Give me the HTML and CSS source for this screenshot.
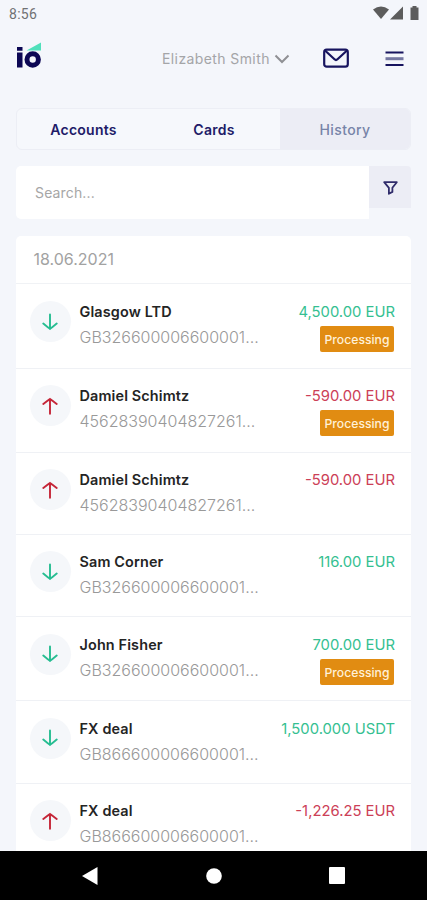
FILE: index.html
```html
<!DOCTYPE html>
<html lang="en">
<head>
<meta charset="utf-8">
<title>History</title>
<link rel="stylesheet" href="styles.css">
</head>
<body>
<svg width="0" height="0" class="defs">
  <symbol id="down" viewBox="0 0 16 18"><path d="M8 1.500v14.500M1.300 10.600L5.500 13.900Q7 15 8 15.800Q9 15 10.500 13.900L14.700 10.600"/></symbol>
  <symbol id="up" viewBox="0 0 16 18"><path d="M8 16.800V2M1.300 7L5.500 3.800Q7 2.800 8 2Q9 2.800 10.500 3.800L14.700 7"/></symbol>
</svg>
<div class="screen">
  <div class="status">
    <span class="time">8:56</span>
    <svg class="signals" width="47" height="16" viewBox="0 0 47 16"><path d="M0 3.500Q8 -2.500 16 3.500L8 13z"/><path d="M17 13.500L30 .5v13z"/><path d="M37.500 1.500h2V0h4v1.500h2v12.500h-8z"/></svg>
  </div>
  <header class="header">
    <svg class="logo" width="26" height="28" viewBox="0 0 26 28"><path class="mint" d="M10.500 8.500L25 .5v8z"/><path class="ink" d="M1 5h5.500v3.800H1zM1 10.500h5.500v15H1z"/><circle cx="16.700" cy="17.500" r="5.700"/></svg>
    <div class="user"><span class="username">Elizabeth Smith</span><svg width="16" height="10" viewBox="0 0 16 10"><path d="M1.500 1.500L8 8l6.500-6.500"/></svg></div>
    <svg class="mail" width="26" height="20" viewBox="0 0 26 20"><rect x="1.200" y="1.700" width="23.600" height="17" rx="2.500"/><path d="M2 2.500l9.500 8.800q1.500 1.400 3 0L24 2.500"/></svg>
    <svg class="menu" width="19" height="16" viewBox="0 0 19 16"><path d="M.5 1.500h18M.5 14h18"/><path class="mid" d="M.5 7.700h18"/></svg>
  </header>
  <nav class="tabs"><span>Accounts</span><span>Cards</span><span class="active">History</span></nav>
  <div class="search">
    <div class="field">Search...</div>
    <div class="filter"><svg width="15" height="14" viewBox="0 0 15 14"><path d="M1.200 1.200h12.600L9.400 6.800v4.100l-3.500 1.900v-6z"/></svg></div>
  </div>
  <main class="list">
    <div class="date"><span>18.06.2021</span></div>
    <article class="row r1"><div class="icon in"><svg><use href="#down"/></svg></div><div class="info"><b>Glasgow LTD</b><p>GB326600006600001...</p></div><div class="amount in"><span>4,500.00 EUR</span><em>Processing</em></div></article>
    <article class="row r2"><div class="icon out"><svg><use href="#up"/></svg></div><div class="info"><b>Damiel Schimtz</b><p>45628390404827261...</p></div><div class="amount out"><span>-590.00 EUR</span><em>Processing</em></div></article>
    <article class="row r3"><div class="icon out"><svg><use href="#up"/></svg></div><div class="info"><b>Damiel Schimtz</b><p>45628390404827261...</p></div><div class="amount out"><span>-590.00 EUR</span></div></article>
    <article class="row r4"><div class="icon in"><svg><use href="#down"/></svg></div><div class="info"><b>Sam Corner</b><p>GB326600006600001...</p></div><div class="amount in"><span>116.00 EUR</span></div></article>
    <article class="row r5"><div class="icon in"><svg><use href="#down"/></svg></div><div class="info"><b>John Fisher</b><p>GB326600006600001...</p></div><div class="amount in"><span>700.00 EUR</span><em>Processing</em></div></article>
    <article class="row r6"><div class="icon in"><svg><use href="#down"/></svg></div><div class="info"><b>FX deal</b><p>GB866600006600001...</p></div><div class="amount in"><span>1,500.000 USDT</span></div></article>
    <article class="row r7"><div class="icon out"><svg><use href="#up"/></svg></div><div class="info"><b>FX deal</b><p>GB866600006600001...</p></div><div class="amount out"><span>-1,226.25 EUR</span></div></article>
  </main>
  <footer class="navbar">
    <svg width="17" height="18" viewBox="0 0 17 18"><path d="M0 9L15.500 0v18z"/></svg>
    <svg width="16" height="16" viewBox="0 0 16 16"><circle cx="8" cy="8" r="7.800"/></svg>
    <svg width="16" height="17" viewBox="0 0 16 17"><rect width="16" height="17" rx="1"/></svg>
  </footer>
</div>
</body>
</html>
```
FILE: styles.css
```css
* { box-sizing: border-box; }
body { margin: 0; background: #f4f6fb; font-family: Inter, "Liberation Sans", sans-serif; }
svg { display: block; flex: none; fill: none; }
.defs { display: none; }
.screen { width: 427px; height: 900px; overflow: hidden; display: flex; flex-direction: column; }
.status { height: 28px; flex: none; display: flex; justify-content: space-between; align-items: flex-start; padding: 6px 7px 0 9px; }
.time { font: 14px/16px Roboto, sans-serif; color: #707173; letter-spacing: .3px; }
.signals { fill: #5c5c5c; }
.header { height: 80px; flex: none; display: flex; align-items: flex-start; padding: 14px 23px 0 16px; }
.logo .mint { fill: #50e0bb; }
.logo .ink { fill: #0c0754; }
.logo circle { stroke: #0c0754; stroke-width: 5; }
.user { display: flex; align-items: center; margin: 7px 0 0 120px; gap: 5px; height: 20px; font-size: 14px; color: #a4a5a8; white-space: nowrap; }
.username { width: 107px; line-height: 20px; letter-spacing: .4px; }
.user svg { stroke: #8f9094; stroke-width: 2; }
.mail { margin: 6px 0 0 33px; stroke: #17145f; stroke-width: 2.200; }
.menu { margin: 9px 0 0 auto; stroke: #17145f; stroke-width: 2.200; }
.menu .mid { stroke: #7477a1; stroke-width: 3; }
.tabs { height: 42px; flex: none; margin: 0 16px 16px; display: grid; grid-template-columns: 132px 131px 1fr; border: 1px solid #eceef5; border-radius: 6px; background: #f6f8fc; overflow: hidden; }
.tabs span { display: flex; align-items: center; justify-content: center; font-size: 14px; font-weight: 600; color: #211b68; letter-spacing: .25px; padding-left: 1px; }
.tabs span:nth-child(2) { padding: 0 1px 0 0; }
.tabs .active { background: #ecedf5; color: #7784a8; font-weight: 500; padding: 0; letter-spacing: .4px; }
.search { flex: none; height: 53px; margin: 0 16px 17px; display: flex; align-items: flex-start; }
.field { flex: 1; height: 53px; line-height: 54px; padding-left: 19px; background: #fff; border-radius: 5px 0 0 5px; font-size: 14px; color: #a6a6a6; letter-spacing: .15px; }
.filter { width: 42px; height: 42px; padding: 15px 0 0 14px; background: #ecedf5; border-radius: 0 4px 0 0; }
.filter svg { stroke: #302c6b; stroke-width: 1.800; stroke-linejoin: round; }
.list { flex: none; height: 615px; margin: 0 16px; background: #fff; border-radius: 5px 5px 0 0; overflow: hidden; }
.date { height: 48px; padding-left: 17.500px; line-height: 47px; font-size: 16px; color: #a2a2a2; border-bottom: 1px solid #f0f2f5; }
.row { display: flex; align-items: flex-start; padding: 16px 16px 0 14px; height: 84px; border-bottom: 1px solid #eff1f5; }
.r1 { height: 85px; padding-top: 17px; }
.r3, .r4 { height: 82px; }
.r6 { height: 83px; }
.r5, .r6 { padding-top: 16.500px; }
.icon { width: 41px; height: 41px; flex: none; border-radius: 50%; background: #f5f7fa; display: flex; align-items: center; justify-content: center; }
.icon svg { width: 16px; height: 18px; margin-right: 1px; stroke: currentColor; stroke-width: 1.900; stroke-linecap: round; }
.icon.in { color: #26bd91; }
.icon.out { color: #c52638; }
.info { flex: 1; margin-left: 8.500px; white-space: nowrap; }
.info b { display: block; font-size: 14.400px; line-height: 21px; font-weight: 580; color: #242424; letter-spacing: .15px; }
.info p { margin: 2px 0 0; font-size: 16px; line-height: 26px; color: #999; font-weight: 300; }
.amount { display: flex; flex-direction: column; align-items: flex-end; font-size: 14.800px; line-height: 22px; white-space: nowrap; font-weight: 370; }
.amount.in { color: #35bf91; }
.amount.out { color: #cc4057; }
.amount em { margin: 3px 1px 0 0; width: 74px; height: 26px; line-height: 27px; font-size: 12.200px; font-weight: 450; font-style: normal; text-align: center; border-radius: 2px; color: #fff1d8; background: #e18c12; }
.navbar { height: 49px; flex: none; background: #000; display: flex; align-items: center; padding: 0 82px; justify-content: space-between; }
.navbar svg { fill: #fff; }
```
